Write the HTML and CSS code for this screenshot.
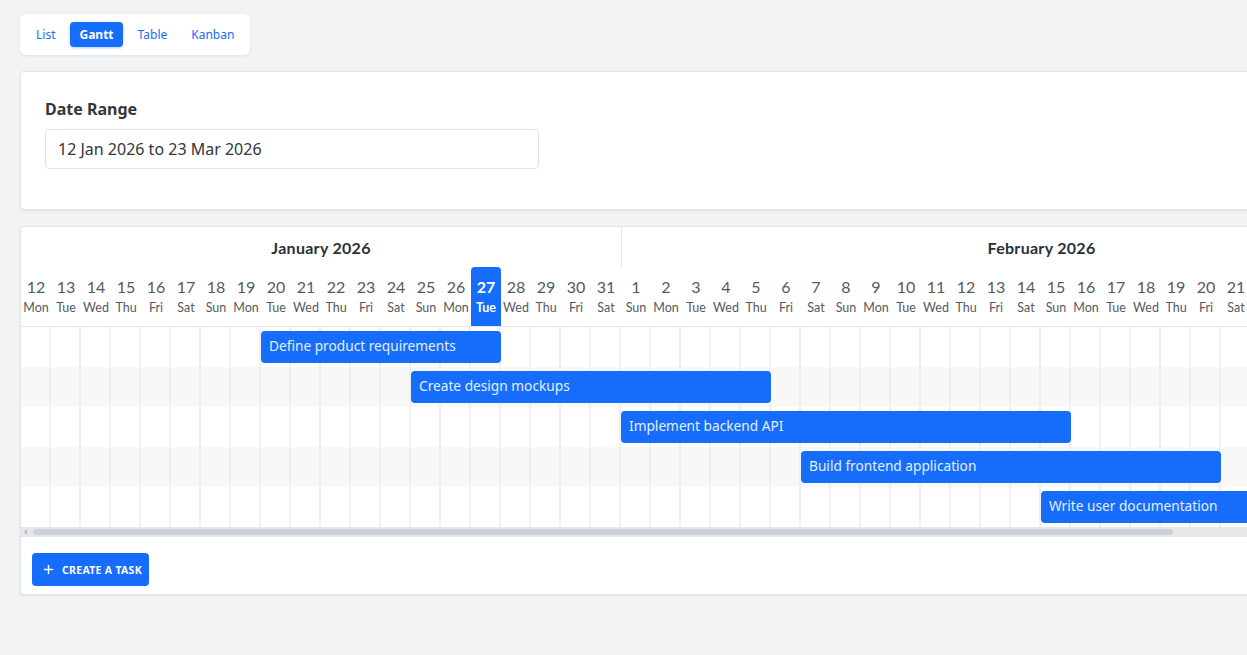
FILE: index.html
```html
<!DOCTYPE html>
<html lang="en">
<head>
  <meta charset="UTF-8" />
  <meta name="viewport" content="width=device-width, initial-scale=1" />
  <title>Project planning</title>
  <link rel="stylesheet" href="styles.css">
</head>
<body>
  <div class="page">
    <!-- Troca de visualização -->
    <nav class="views">
      <a class="view">List</a>
      <a class="view active">Gantt</a>
      <a class="view">Table</a>
      <a class="view">Kanban</a>
    </nav>

    <section class="card filters">
      <label class="field-label" for="range">Date Range</label>
      <input id="range" class="field-input" type="text" value="12 Jan 2026 to 23 Mar 2026" />
    </section>

    <section class="card gantt">
      <div class="gantt-scroll">
        <div class="timeline">
          <div class="months">
            <div class="month" style="width: 600px">January 2026</div>
            <div class="month" style="width: 840px">February 2026</div>
          </div>
          <div class="days">
            <div class="day"><b>12</b><span>Mon</span></div>
            <div class="day"><b>13</b><span>Tue</span></div>
            <div class="day"><b>14</b><span>Wed</span></div>
            <div class="day"><b>15</b><span>Thu</span></div>
            <div class="day"><b>16</b><span>Fri</span></div>
            <div class="day"><b>17</b><span>Sat</span></div>
            <div class="day"><b>18</b><span>Sun</span></div>
            <div class="day"><b>19</b><span>Mon</span></div>
            <div class="day"><b>20</b><span>Tue</span></div>
            <div class="day"><b>21</b><span>Wed</span></div>
            <div class="day"><b>22</b><span>Thu</span></div>
            <div class="day"><b>23</b><span>Fri</span></div>
            <div class="day"><b>24</b><span>Sat</span></div>
            <div class="day"><b>25</b><span>Sun</span></div>
            <div class="day"><b>26</b><span>Mon</span></div>
            <div class="day today"><b>27</b><span>Tue</span></div>
            <div class="day"><b>28</b><span>Wed</span></div>
            <div class="day"><b>29</b><span>Thu</span></div>
            <div class="day"><b>30</b><span>Fri</span></div>
            <div class="day"><b>31</b><span>Sat</span></div>
            <div class="day"><b>1</b><span>Sun</span></div>
            <div class="day"><b>2</b><span>Mon</span></div>
            <div class="day"><b>3</b><span>Tue</span></div>
            <div class="day"><b>4</b><span>Wed</span></div>
            <div class="day"><b>5</b><span>Thu</span></div>
            <div class="day"><b>6</b><span>Fri</span></div>
            <div class="day"><b>7</b><span>Sat</span></div>
            <div class="day"><b>8</b><span>Sun</span></div>
            <div class="day"><b>9</b><span>Mon</span></div>
            <div class="day"><b>10</b><span>Tue</span></div>
            <div class="day"><b>11</b><span>Wed</span></div>
            <div class="day"><b>12</b><span>Thu</span></div>
            <div class="day"><b>13</b><span>Fri</span></div>
            <div class="day"><b>14</b><span>Sat</span></div>
            <div class="day"><b>15</b><span>Sun</span></div>
            <div class="day"><b>16</b><span>Mon</span></div>
            <div class="day"><b>17</b><span>Tue</span></div>
            <div class="day"><b>18</b><span>Wed</span></div>
            <div class="day"><b>19</b><span>Thu</span></div>
            <div class="day"><b>20</b><span>Fri</span></div>
            <div class="day"><b>21</b><span>Sat</span></div>
            <div class="day"><b>22</b><span>Sun</span></div>
            <div class="day"><b>23</b><span>Mon</span></div>
            <div class="day"><b>24</b><span>Tue</span></div>
            <div class="day"><b>25</b><span>Wed</span></div>
            <div class="day"><b>26</b><span>Thu</span></div>
            <div class="day"><b>27</b><span>Fri</span></div>
            <div class="day"><b>28</b><span>Sat</span></div>
          </div>

          <!-- Linhas de tarefas: left/width = dia inicial x 30px -->
          <div class="rows">
            <div class="row">
              <div class="bar" style="left: 240px; width: 240px">Define product requirements</div>
            </div>
            <div class="row">
              <div class="bar" style="left: 390px; width: 360px">Create design mockups</div>
            </div>
            <div class="row">
              <div class="bar" style="left: 600px; width: 450px">Implement backend API</div>
            </div>
            <div class="row">
              <div class="bar" style="left: 780px; width: 420px">Build frontend application</div>
            </div>
            <div class="row">
              <div class="bar" style="left: 1020px; width: 420px">Write user documentation</div>
            </div>
          </div>
        </div>
      </div>

      <div class="scrollbar">
        <span class="scroll-arrow"></span>
        <span class="scroll-thumb"></span>
      </div>

      <div class="gantt-footer">
        <button class="btn-create" type="button">
          <svg viewBox="0 0 12 12" width="11" height="11" aria-hidden="true">
            <path d="M6 1v10M1 6h10" stroke="currentColor" stroke-width="1.6" fill="none" />
          </svg>
          Create a task
        </button>
      </div>
    </section>
  </div>
</body>
</html>
```

FILE: styles.css
```css
:root {
  --fundo: #f2f3f5;
  --azul: #166dfb;
  --borda: #e3e5e8;
  --linha-grade: #f0f0f1;
  --texto: #33363b;
  --texto-dia: #555a60;
}

* {
  margin: 0;
  padding: 0;
  box-sizing: border-box;
}

html, body {
  overflow: hidden;
  height: 100%;
}

body {
  background: var(--fundo);
  font-family: 'Noto Sans', 'Open Sans', sans-serif;
  color: var(--texto);
}

.page {
  width: 1560px;
  padding: 14px 20px;
  display: flex;
  flex-direction: column;
  align-items: flex-start;
}

/* Abas */
.views {
  display: flex;
  gap: 6px;
  padding: 8px 7px;
  background: #fff;
  border-radius: 6px;
  box-shadow: 0 1px 3px rgba(0, 0, 0, 0.08);
}
.view {
  font-size: 12px;
  line-height: 25px;
  padding: 0 9px;
  color: var(--azul);
  border-radius: 4px;
  cursor: pointer;
}
.view.active {
  background: var(--azul);
  color: #fff;
  font-weight: 700;
  box-shadow: 0 1px 3px rgba(22, 109, 251, 0.35);
}

.card {
  width: 100%;
  background: #fff;
  border: 1px solid var(--borda);
  border-radius: 4px;
  box-shadow: 0 1px 3px rgba(0, 0, 0, 0.07);
}

/* Filtro de datas */
.filters {
  margin-top: 16px;
  padding: 25px 24px 40px;
  display: flex;
  flex-direction: column;
  gap: 8px;
}
.field-label {
  font-size: 16px;
  font-weight: 700;
  line-height: 24px;
  color: #33363b;
}
.field-input {
  width: 494px;
  height: 40px;
  padding: 0 12px;
  font-family: inherit;
  font-size: 16px;
  color: #33363b;
  border: 1px solid #dfe2e6;
  border-radius: 4px;
  outline: none;
}

/* Gantt */
.gantt {
  margin-top: 16px;
}
.gantt-scroll {
  overflow: hidden;
}
.timeline {
  width: 1440px;
  font-family: 'Lato', 'Noto Sans', sans-serif;
}
.months {
  display: flex;
  height: 40px;
}
.month {
  display: flex;
  align-items: center;
  justify-content: center;
  padding-top: 1px;
  font-size: 16px;
  font-weight: 700;
  color: #2a2f3a;
  letter-spacing: 0.3px;
}
.month + .month {
  border-left: 1px solid #e6e6e8;
}
.days {
  display: flex;
  border-bottom: 1px solid #e6e6e8;
}
.day {
  width: 30px;
  height: 59px;
  display: flex;
  flex-direction: column;
  align-items: center;
  padding-top: 9px;
  color: var(--texto-dia);
}
.day b {
  font-weight: 400;
  font-size: 16px;
  line-height: 22px;
}
.day span {
  font-size: 12.5px;
  line-height: 19px;
}
.day.today {
  background: var(--azul);
  color: #fff;
  border-radius: 4px 4px 0 0;
}
.day.today b,
.day.today span {
  font-weight: 700;
}

.row {
  position: relative;
  height: 40px;
  background-image: repeating-linear-gradient(to right, transparent 0 28px, var(--linha-grade) 28px 30px);
}
.row:nth-child(even) {
  background-color: #f8f8f8;
}
.bar {
  position: absolute;
  top: 4px;
  height: 32px;
  padding-left: 8px;
  line-height: 30px;
  font-family: 'Noto Sans', sans-serif;
  font-size: 13.7px;
  color: #e4edff;
  background: var(--azul);
  border-radius: 4px;
  white-space: nowrap;
  overflow: hidden;
}

/* Barra de rolagem horizontal */
.scrollbar {
  display: flex;
  align-items: center;
  height: 10px;
  background: #e5e7eb;
  padding-left: 3px;
  gap: 6px;
}
.scroll-arrow {
  width: 0;
  height: 0;
  border-top: 3px solid transparent;
  border-bottom: 3px solid transparent;
  border-right: 3px solid #b9bdc4;
}
.scroll-thumb {
  width: 1140px;
  height: 6px;
  border-radius: 3px;
  background: #cdd1d8;
}

.gantt-footer {
  padding: 16px 11px 8px;
}
.btn-create {
  display: inline-flex;
  align-items: center;
  gap: 8px;
  height: 33px;
  padding: 0 7px 0 11px;
  font-family: 'Noto Sans', sans-serif;
  font-size: 10.5px;
  font-weight: 700;
  text-transform: uppercase;
  letter-spacing: 0.3px;
  color: #fff;
  background: var(--azul);
  border: none;
  border-radius: 4px;
  cursor: pointer;
}
```
